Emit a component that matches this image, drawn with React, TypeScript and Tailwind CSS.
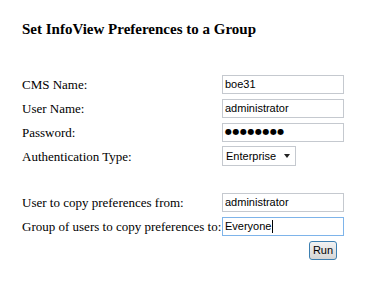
import React from "react";

const serif = { fontFamily: '"Liberation Serif", "Times New Roman", serif' };

const Field = ({ value, type = "text" }: { value: string; type?: string }) => (
  <input
    type={type}
    readOnly
    defaultValue={value}
    className="h-[19px] w-[122px] border border-[#c5c9cf] bg-white px-[2px] font-['Liberation_Sans',Arial,sans-serif] text-[11px] text-black outline-none"
  />
);

const Row = ({ label, children }: { label?: string; children: React.ReactNode }) => (
  <div className="flex h-[24px] items-center">
    <div className="w-[200px] shrink-0 text-[13px] leading-none text-black">{label}</div>
    {children}
  </div>
);

export default function App() {
  return (
    <div className="h-[285px] w-[385px] bg-white pl-[22px] pt-[21px]" style={serif}>
      <h1 className="text-[15px] font-bold leading-[17px] text-black">
        Set InfoView Preferences to a Group
      </h1>
      <div className="mt-[34px] flex flex-col">
        <Row label="CMS Name:">
          <Field value="boe31" />
        </Row>
        <Row label="User Name:">
          <Field value="administrator" />
        </Row>
        <Row label="Password:">
          <div className="flex h-[19px] w-[122px] items-center border border-[#c5c9cf] bg-white px-[2px] font-['DejaVu_Sans',sans-serif] text-[8px] tracking-[0.5px] text-black">
            ●●●●●●●●
          </div>
        </Row>
        <Row label="Authentication Type:">
          <div className="flex h-[20px] w-[74px] items-center justify-between border border-[#c5c9cf] bg-white pl-[3px] pr-[5px] font-['Liberation_Sans',Arial,sans-serif] text-[11px] text-black">
            <span>Enterprise</span>
            <svg width="6" height="4" viewBox="0 0 6 4">
              <path d="M0 0h6L3 4z" fill="#222" />
            </svg>
          </div>
        </Row>
        <div className="h-[22px]" />
        <Row label="User to copy preferences from:">
          <Field value="administrator" />
        </Row>
        <Row label="Group of users to copy preferences to:">
          <div className="flex h-[19px] w-[122px] items-center border border-[#7eb4ea] bg-white px-[2px] font-['Liberation_Sans',Arial,sans-serif] text-[11px] text-black">
            <span>Everyone</span>
            <span className="ml-[1px] h-[13px] w-[1px] bg-black" />
          </div>
        </Row>
        <Row>
          <button className="ml-[87px] h-[19px] w-[28px] rounded-[3px] border border-[#3c7fb1] bg-gradient-to-b from-[#f2f2f2] to-[#d6d6d6] font-['Liberation_Sans',Arial,sans-serif] text-[11px] leading-none text-black">
            Run
          </button>
        </Row>
      </div>
    </div>
  );
}
